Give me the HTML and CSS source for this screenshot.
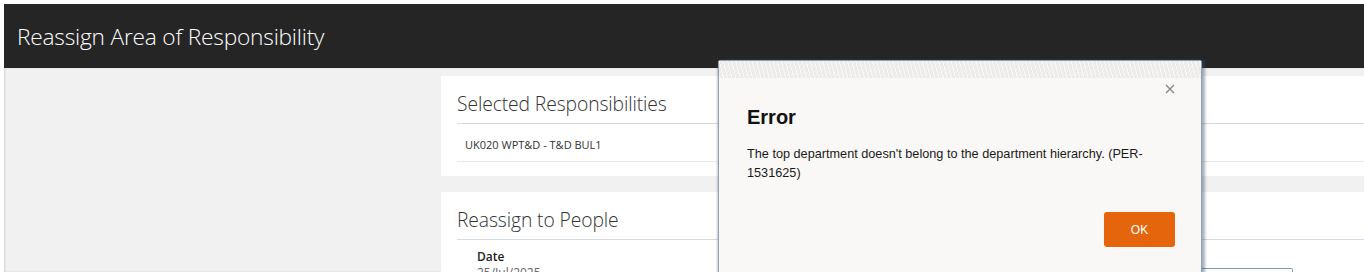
FILE: index.html
```html
<!DOCTYPE html>
<html lang="en">
<head>
    <meta charset="UTF-8">
    <meta name="viewport" content="width=device-width, initial-scale=1.0">
    <title>Reassign Area of Responsibility</title>
    <link rel="stylesheet" href="styles.css">
</head>
<body>
    <div class="app">
        <header class="page-header">
            <h1>Reassign Area of Responsibility</h1>
        </header>

        <main class="page-body">
            <div class="side"></div>
            <div class="content">
                <section class="panel panel-selected">
                    <h2 class="panel-title">Selected Responsibilities</h2>
                    <div class="resp-row">UK020 WPT&amp;D - T&amp;D BUL1</div>
                </section>

                <section class="panel panel-reassign">
                    <h2 class="panel-title">Reassign to People</h2>
                    <div class="form-row">
                        <div class="field field-date">
                            <label>Date</label>
                            <div class="value">25/Jul/2025</div>
                        </div>
                        <div class="field field-person">
                            <label>Person</label>
                            <input type="text" class="text-input">
                        </div>
                    </div>
                </section>
            </div>
        </main>

        <div class="dialog" role="alertdialog">
            <div class="dialog-strip"></div>
            <button class="dialog-close" aria-label="Close">
                <svg width="10" height="10" viewBox="0 0 10 10">
                    <path d="M1 1 L9 9 M9 1 L1 9" stroke="#8a8a8a" stroke-width="1.4" fill="none"/>
                </svg>
            </button>
            <div class="dialog-body">
                <h3 class="dialog-title">Error</h3>
                <p class="dialog-message">The top department doesn't belong to the department hierarchy. (PER-1531625)</p>
                <div class="dialog-actions">
                    <button class="btn-ok">OK</button>
                </div>
            </div>
        </div>
    </div>
</body>
</html>
```

FILE: styles.css
```css
html, body {
    margin: 0;
    height: 100%;
    overflow: hidden;
    background-color: #fff;
}

body {
    font-family: 'Open Sans', 'Liberation Sans', sans-serif;
    color: #333;
}

.app {
    position: relative;
    padding: 4px 0 0 4px;
    height: 100%;
    box-sizing: border-box;
}

.page-header {
    background-color: #252525;
    height: 64px;
    display: flex;
    align-items: center;
    padding-left: 13px;
}

.page-header h1 {
    margin: 0;
    color: #fff;
    font-size: 22.7px;
    font-weight: 300;
    letter-spacing: -0.2px;
}

.page-body {
    display: grid;
    grid-template-columns: 437px 1fr;
    background-color: #f1f1f1;
    box-shadow: inset 1px 0 2px rgba(0, 0, 0, 0.12);
    height: 204px;
}

.content {
    display: flex;
    flex-direction: column;
    gap: 16px;
    padding-top: 8px;
}

.panel {
    background-color: #fff;
    padding: 0 0 0 16px;
}

.panel-selected {
    height: 100px;
}

.panel-title {
    margin: 0;
    font-size: 19.3px;
    font-weight: 300;
    color: #333;
    height: 48px;
    line-height: 56px;
    border-bottom: 1px solid #d4dbe3;
    box-sizing: border-box;
    letter-spacing: -0.1px;
}

.resp-row {
    font-size: 11px;
    color: #333;
    padding-left: 8px;
    height: 37px;
    line-height: 42px;
    border-bottom: 1px solid #e8e8e8;
}

.form-row {
    display: grid;
    grid-template-columns: 1fr 200px 71px;
    padding-top: 9px;
}

.field-date {
    padding-left: 20px;
}

.field label {
    display: block;
    font-size: 12px;
    font-weight: 600;
    color: #222;
    line-height: 16px;
}

.field .value {
    font-size: 12px;
    color: #666;
    line-height: 16px;
}

.field-person {
    padding-top: 19px;
}

.field-person label {
    display: none;
}

.text-input {
    display: block;
    width: 100%;
    box-sizing: border-box;
    height: 28px;
    border: 1px solid #8a99a8;
    border-radius: 2px;
}

/* modal */
.dialog {
    position: absolute;
    left: 718px;
    top: 60px;
    width: 482px;
    height: 230px;
    background-color: #f9f8f6;
    border: 1px solid #8fa3b6;
    border-radius: 2px;
    box-shadow: 3px 0 3px rgba(60, 80, 100, 0.45), -1px 0 2px rgba(60, 80, 100, 0.3);
    font-family: 'Liberation Sans', Arial, sans-serif;
}

.dialog-strip {
    height: 17px;
    background-color: #efeeec;
    background-image:
        repeating-linear-gradient(75deg, rgba(255, 255, 255, 0.6) 0 1px, transparent 1px 4px),
        repeating-linear-gradient(-60deg, rgba(0, 0, 0, 0.025) 0 1px, transparent 1px 3px);
}

.dialog-close {
    position: absolute;
    top: 23px;
    right: 26px;
    background: none;
    border: none;
    padding: 0;
    cursor: pointer;
    line-height: 0;
}

.dialog-body {
    padding: 27px 26px 0 28px;
}

.dialog-title {
    margin: 0;
    font-size: 20px;
    font-weight: bold;
    color: #111;
    line-height: 24px;
}

.dialog-message {
    margin: 16px 0 0 0;
    font-size: 12.7px;
    line-height: 19px;
    color: #1a1a1a;
}

.dialog-actions {
    display: flex;
    justify-content: flex-end;
    margin-top: 29px;
}

.btn-ok {
    width: 71px;
    height: 35px;
    background-color: #e5650d;
    color: #fff;
    border: none;
    border-radius: 3px;
    font-family: 'Liberation Sans', Arial, sans-serif;
    font-size: 12px;
    cursor: pointer;
}
```
